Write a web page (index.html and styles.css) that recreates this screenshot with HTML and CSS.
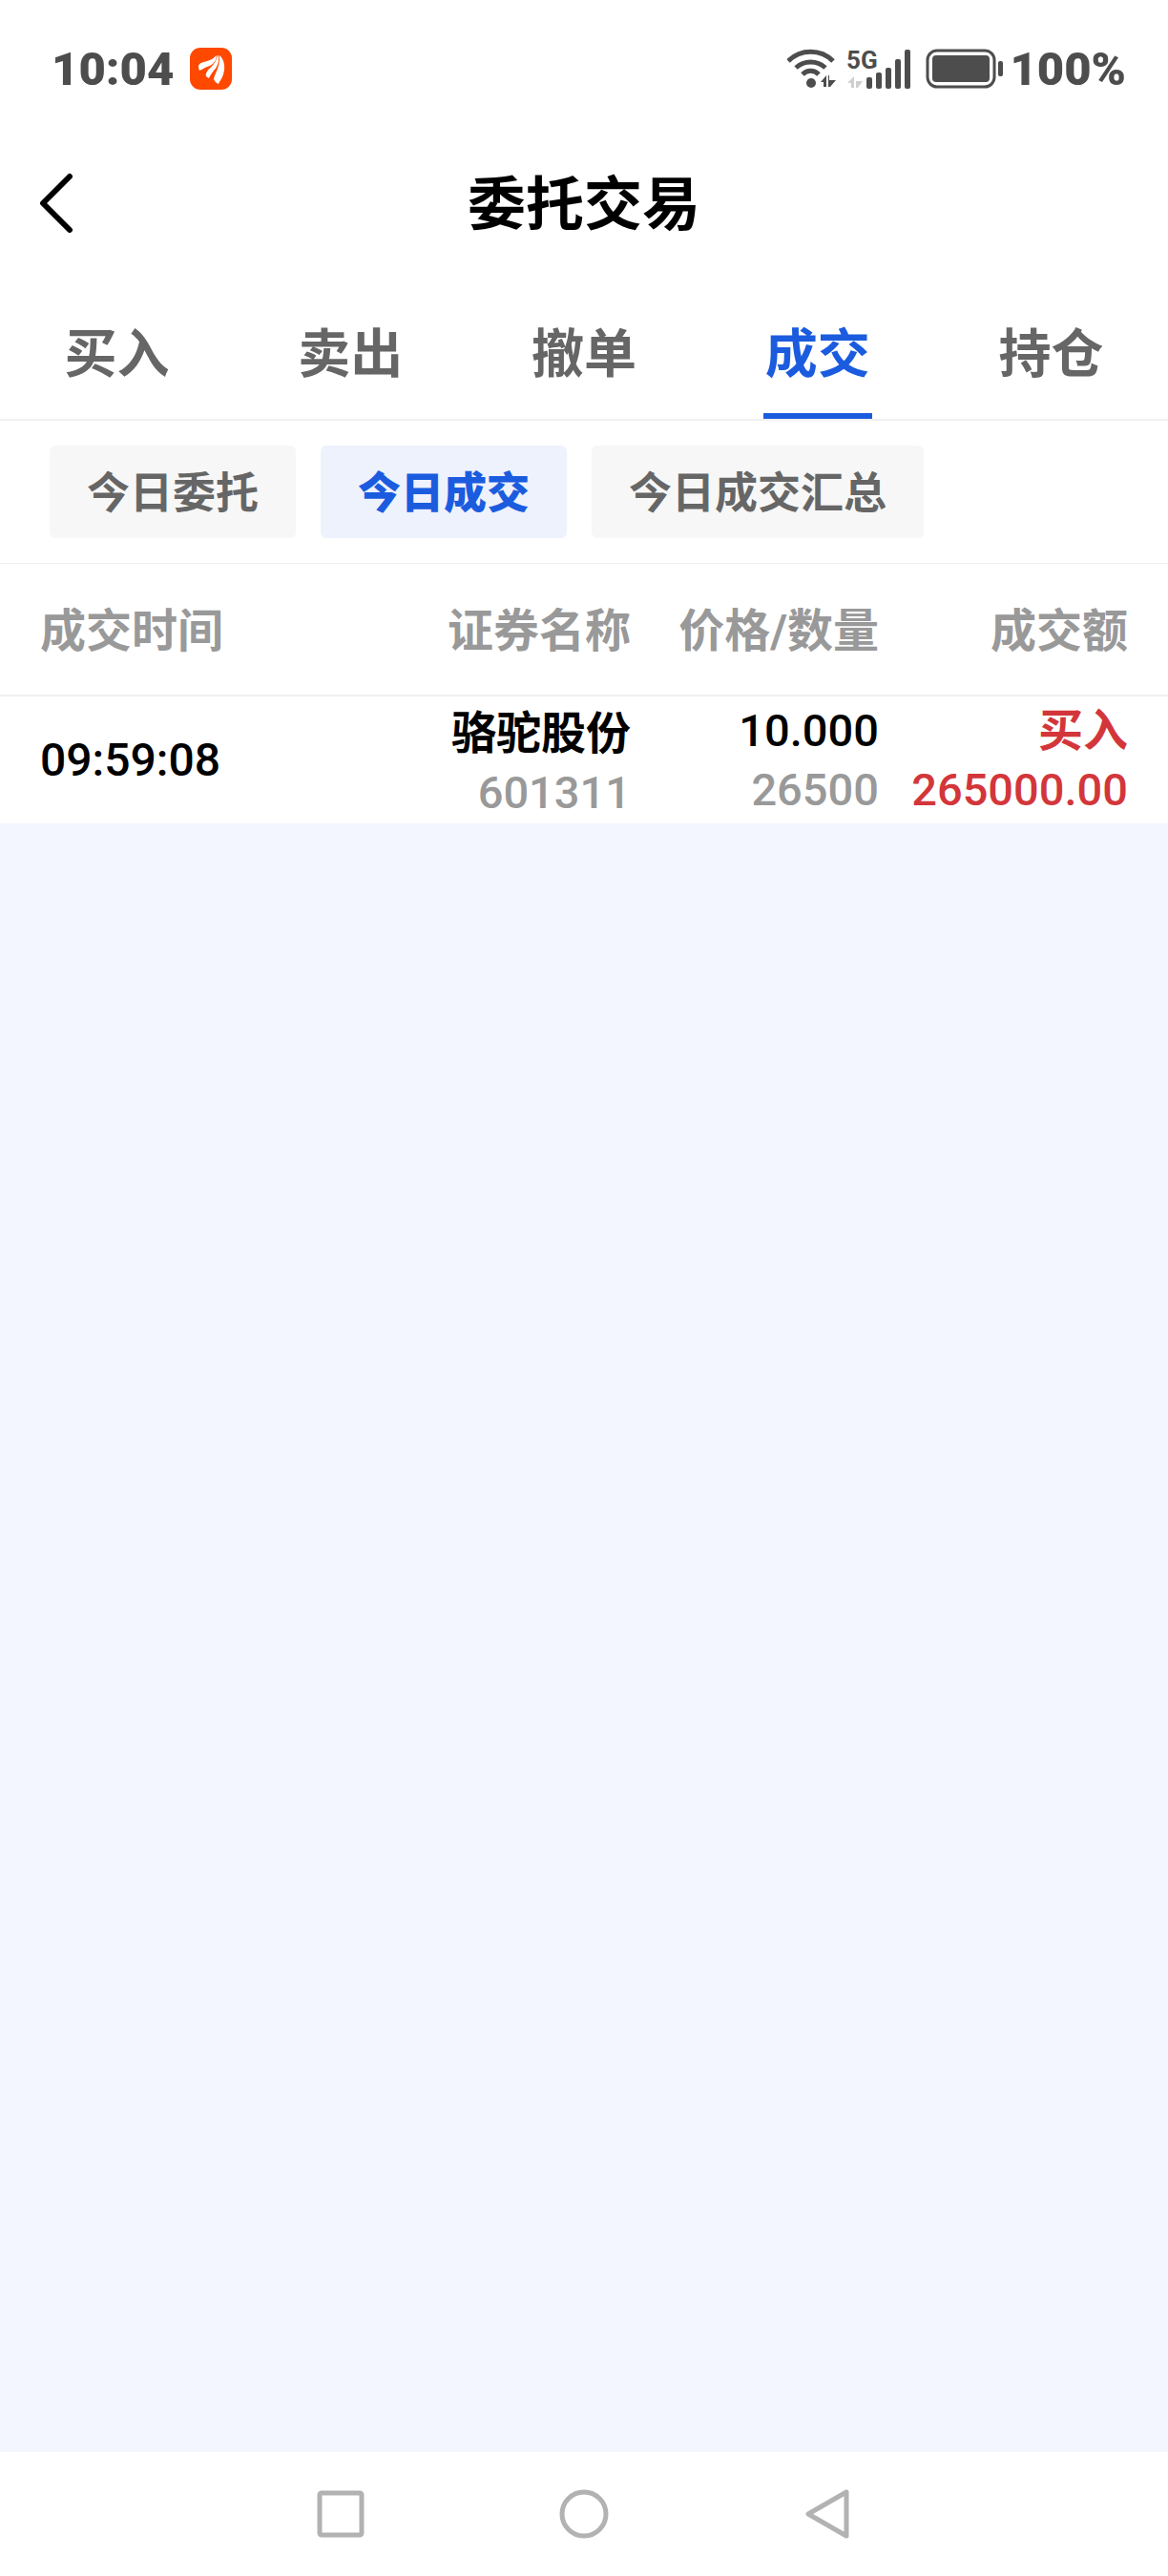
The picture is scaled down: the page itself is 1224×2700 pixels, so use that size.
FILE: index.html
```html
<!DOCTYPE html>
<html lang="zh-CN">
<head>
    <meta charset="UTF-8">
    <meta name="viewport" content="width=device-width, initial-scale=1.0">
    <title>委托交易</title>
    <link rel="stylesheet" href="styles.css">
</head>
<body>
    <div class="status-bar">
        <div class="status-left">
            <span class="status-text">10:04</span>
            <svg class="app-icon" viewBox="0 0 44 44">
                <rect width="44" height="44" rx="11" fill="#ff4800"/>
                <g fill="#fff">
                    <path d="M9 19 C10 16 14 15 18 14 C22 13 25 11 28 8 C28 14 24 18 18 20 C14 22 12 23 10 24 C9 22 9 20 9 19 Z"/>
                    <path d="M17 27 C19 21 27 19 29 8 L30 8 C31 14 29 20 25 24 C23 27 21 29 20 32 C17 31 16 29 17 27 Z"/>
                    <path d="M25 33 C26 27 32 20 31 8 C37 13 37 22 35 28 C34 32 31 35 30 38 C27 37 26 35 25 33 Z"/>
                </g>
            </svg>
        </div>
        <div class="status-right">
            <svg class="signal-icons" viewBox="0 -6 130 54">
                <g fill="none" stroke="#4d4d4d" stroke-width="5">
                    <path d="M1 13 C14 0 35 0 48 13"/>
                    <path d="M9 20 C18 12 31 12 40 20"/>
                    <path d="M16 27 C21 22 28 22 33 27"/>
                </g>
                <circle cx="25" cy="36" r="5" fill="#4d4d4d"/>
                <path d="M35 35 L41 28 V40 H38 V35 Z M44 28 V33 H51 L45 40 H43 V28 Z" fill="#4d4d4d"/>
                <text class="network" x="62" y="21">5G</text>
                <path d="M63 36 L70 29 V41 H67 V36 Z M72 29 V34 H79 L74 41 H72 Z" fill="#cfcfcf"/>
                <g fill="#4d4d4d">
                    <rect x="83" y="30" width="6" height="12" rx="2"/>
                    <rect x="93" y="25" width="6" height="17" rx="2"/>
                    <rect x="103" y="20" width="6" height="22" rx="2"/>
                    <rect x="113" y="11" width="6" height="31" rx="2"/>
                    <rect x="123" y="1" width="6" height="41" rx="2"/>
                </g>
            </svg>
            <svg class="battery" viewBox="0 0 82 42">
                <rect x="2" y="2" width="70" height="38" rx="10" fill="none" stroke="#4d4d4d" stroke-width="3"/>
                <rect x="7" y="7" width="60" height="28" rx="4" fill="#4d4d4d"/>
                <rect x="76" y="13" width="5" height="16" rx="2" fill="#4d4d4d"/>
            </svg>
            <span class="status-text">100%</span>
        </div>
    </div>

    <header class="header">
        <button class="back-button" aria-label="返回">
            <svg class="back-icon" viewBox="0 0 36 64">
                <path d="M32 4 L4 32 L32 60" fill="none" stroke="#000" stroke-width="6" stroke-linecap="round" stroke-linejoin="round"/>
            </svg>
        </button>
        <h1 class="title">委托交易</h1>
    </header>

    <nav class="tabs">
        <a href="#" class="tab"><span class="tab-label">买入</span></a>
        <a href="#" class="tab"><span class="tab-label">卖出</span></a>
        <a href="#" class="tab"><span class="tab-label">撤单</span></a>
        <a href="#" class="tab active"><span class="tab-label">成交</span></a>
        <a href="#" class="tab"><span class="tab-label">持仓</span></a>
    </nav>

    <div class="filters">
        <button class="filter">今日委托</button>
        <button class="filter active">今日成交</button>
        <button class="filter">今日成交汇总</button>
    </div>

    <main class="content">
        <table class="deals">
            <colgroup>
                <col class="col-time">
                <col class="col-name">
                <col class="col-price">
                <col class="col-amount">
            </colgroup>
            <thead>
                <tr>
                    <th>成交时间</th>
                    <th>证券名称</th>
                    <th>价格/数量</th>
                    <th>成交额</th>
                </tr>
            </thead>
            <tbody>
                <tr>
                    <td>09:59:08</td>
                    <td class="stock">
                        <div class="name">骆驼股份</div>
                        <div class="number muted">601311</div>
                    </td>
                    <td>
                        <div class="number">10.000</div>
                        <div class="number muted">26500</div>
                    </td>
                    <td class="buy">
                        <div class="side">买入</div>
                        <div class="number">265000.00</div>
                    </td>
                </tr>
            </tbody>
        </table>
    </main>

    <div class="system-nav">
        <button class="system-button" aria-label="最近任务">
            <svg class="system-icon" viewBox="0 0 52 52"><rect x="4" y="4" width="44" height="44" rx="2"/></svg>
        </button>
        <button class="system-button" aria-label="主屏幕">
            <svg class="system-icon" viewBox="0 0 52 52"><circle cx="26" cy="26" r="23"/></svg>
        </button>
        <button class="system-button" aria-label="返回上一页">
            <svg class="system-icon" viewBox="0 0 52 52"><path d="M46 3 V49 L6 26 Z"/></svg>
        </button>
    </div>
</body>
</html>
```
FILE: styles.css
```css
* {
    margin: 0;
    padding: 0;
    box-sizing: border-box;
}

body {
    min-height: 100vh;
    display: flex;
    flex-direction: column;
    background: #fff;
    color: #000;
    font-family: Roboto, "Noto Sans CJK SC", sans-serif;
    font-weight: 500;
}

button {
    border: none;
    background: none;
    font: inherit;
    color: inherit;
    cursor: pointer;
}

svg {
    display: block;
}

/* Status bar */
.status-bar {
    height: 144px;
    padding: 0 44px 0 54px;
    display: flex;
    justify-content: space-between;
    align-items: center;
}

.status-left,
.status-right {
    display: flex;
    align-items: center;
}

.status-left {
    gap: 17px;
}

.status-right {
    gap: 6px;
}

.status-text {
    padding-top: 2px;
    color: #4d4d4d;
    font-size: 49px;
    font-weight: 900;
    line-height: 56px;
}

.app-icon {
    width: 44px;
    height: 44px;
}

.signal-icons {
    width: 130px;
    height: 54px;
    margin-right: 9px;
}

.network {
    fill: #4d4d4d;
    font-size: 26px;
    font-weight: 700;
}

.battery {
    width: 82px;
    height: 42px;
}

/* Page header */
.header {
    height: 138px;
    display: grid;
    grid-template-columns: 120px 1fr 120px;
    align-items: center;
}

.back-button {
    height: 100%;
    padding-left: 41px;
}

.back-icon {
    width: 36px;
    height: 64px;
}

.title {
    padding-top: 4px;
    text-align: center;
    font-size: 61px;
    font-weight: 700;
    line-height: 80px;
}

/* Main tabs */
.tabs {
    height: 159px;
    display: flex;
    border-bottom: 2px solid #f0f0f0;
}

.tab {
    flex: 1;
    display: flex;
    justify-content: center;
    color: #666;
    font-size: 55px;
    font-weight: 700;
    text-decoration: none;
}

.tab-label {
    padding: 49px 2px 0;
    border-bottom: 6px solid transparent;
    line-height: 80px;
}

.tab.active .tab-label {
    color: #1b5cdf;
    border-color: #1b5cdf;
}

/* Filter chips */
.filters {
    display: flex;
    gap: 26px;
    padding: 26px 52px;
    border-bottom: 1px solid #f0f0f0;
}

.filter {
    padding: 4px 39px 0;
    border-radius: 6px;
    background: #f7f7f7;
    color: #666;
    font-size: 45px;
    font-weight: 700;
    line-height: 93px;
}

.filter.active {
    background: #edf2fd;
    color: #1b5cdf;
    font-weight: 900;
}

/* Deals table */
.content {
    flex: 1;
    background: #f3f6fe;
}

.deals {
    width: 100%;
    table-layout: fixed;
    border-collapse: collapse;
    background: #fff;
    font-size: 48px;
}

.col-time {
    width: 28%;
}

.col-name {
    width: 26%;
}

.col-price {
    width: 260px;
}

.deals th,
.deals td {
    text-align: right;
    white-space: nowrap;
}

.deals th {
    height: 138px;
    padding-bottom: 6px;
    border-bottom: 2px solid #f0f0f0;
    color: #999;
    font-weight: 700;
}

.deals td {
    height: 134px;
}

.deals th:first-child,
.deals td:first-child {
    padding-left: 42px;
    text-align: left;
}

.deals th:last-child,
.deals td:last-child {
    padding-right: 42px;
}

.deals .stock {
    padding-top: 6px;
}

.name,
.side,
.number {
    font-size: 47px;
    line-height: 62px;
}

.name,
.side {
    font-weight: 700;
}

.muted {
    color: #999;
}

.buy {
    color: #d3363a;
}

/* System navigation */
.system-nav {
    height: 130px;
    padding: 0 230px;
    display: flex;
    align-items: center;
}

.system-button {
    flex: 1;
    display: flex;
    justify-content: center;
}

.system-icon {
    width: 52px;
    height: 52px;
    fill: none;
    stroke: #b2b2b2;
    stroke-width: 5;
    stroke-linejoin: round;
}
```
